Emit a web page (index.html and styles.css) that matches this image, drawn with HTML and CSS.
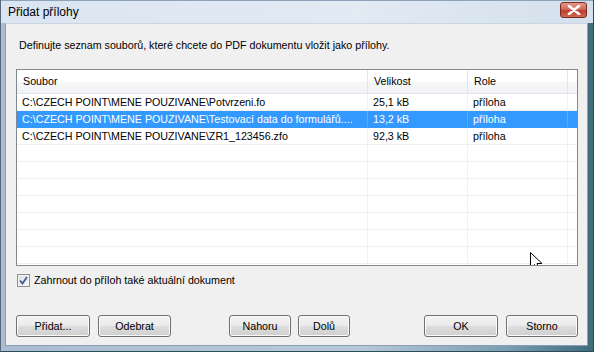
FILE: index.html
```html
<!DOCTYPE html>
<html>
<head>
<meta charset="utf-8">
<link rel="stylesheet" href="styles.css">
</head>
<body>
<div class="window">
  <div class="titlebar">
    <span class="title">Přidat přílohy</span>
    <div class="close">
      <svg width="14" height="10" viewBox="0 0 14 10"><path d="M2 1 L12 9 M12 1 L2 9" stroke="#fff" stroke-width="2.6" stroke-linecap="round"/></svg>
    </div>
  </div>
  <div class="client">
    <p class="intro">Definujte seznam souborů, které chcete do PDF dokumentu vložit jako přílohy.</p>
    <div class="list">
      <div class="row head">
        <div class="c c1">Soubor</div>
        <div class="c c2">Velikost</div>
        <div class="c c3">Role</div>
        <div class="c c4"></div>
      </div>
      <div class="row">
        <div class="c c1">C:\CZECH POINT\MENE POUZIVANE\Potvrzeni.fo</div>
        <div class="c c2">25,1 kB</div>
        <div class="c c3">příloha</div>
        <div class="c c4"></div>
      </div>
      <div class="row sel">
        <div class="c c1">C:\CZECH POINT\MENE POUZIVANE\Testovací data do formulářů....</div>
        <div class="c c2">13,2 kB</div>
        <div class="c c3">příloha</div>
        <div class="c c4"></div>
      </div>
      <div class="row">
        <div class="c c1">C:\CZECH POINT\MENE POUZIVANE\ZR1_123456.zfo</div>
        <div class="c c2">92,3 kB</div>
        <div class="c c3">příloha</div>
        <div class="c c4"></div>
      </div>
      <div class="row"><div class="c c1"></div><div class="c c2"></div><div class="c c3"></div><div class="c c4"></div></div>
      <div class="row"><div class="c c1"></div><div class="c c2"></div><div class="c c3"></div><div class="c c4"></div></div>
      <div class="row"><div class="c c1"></div><div class="c c2"></div><div class="c c3"></div><div class="c c4"></div></div>
      <div class="row"><div class="c c1"></div><div class="c c2"></div><div class="c c3"></div><div class="c c4"></div></div>
      <div class="row"><div class="c c1"></div><div class="c c2"></div><div class="c c3"></div><div class="c c4"></div></div>
      <div class="row"><div class="c c1"></div><div class="c c2"></div><div class="c c3"></div><div class="c c4"></div></div>
      <div class="row"><div class="c c1"></div><div class="c c2"></div><div class="c c3"></div><div class="c c4"></div></div>
      <div class="row last"><div class="c c1"></div><div class="c c2"></div><div class="c c3"></div><div class="c c4"></div></div>
      <svg class="cursor" width="13" height="20" viewBox="0 0 13 20"><path d="M0.5 0.5 L0.5 16.5 L4.5 12.5 L7.5 19.5 L10 18.5 L7 11.5 L12 11.5 Z" fill="#fff" stroke="#000" stroke-width="1"/></svg>
    </div>
    <label class="check">
      <span class="box"><svg width="9" height="9" viewBox="0 0 9 9"><path d="M1 4.5 L3.5 7.5 L8 1" fill="none" stroke="#3f5a93" stroke-width="1.8"/></svg></span>
      <span>Zahrnout do příloh také aktuální dokument</span>
    </label>
    <div class="buttons">
      <button class="btn w74">Přidat...</button>
      <button class="btn w73 g8">Odebrat</button>
      <button class="btn w62 g58">Nahoru</button>
      <button class="btn w52 g7">Dolů</button>
      <button class="btn w74 g74">OK</button>
      <button class="btn w72 g8">Storno</button>
    </div>
  </div>
</div>
</body>
</html>
```
FILE: styles.css
```css
html, body {
  margin: 0;
  padding: 0;
  background: #ffffff;
}
.window {
  width: 594px;
  height: 352px;
  box-sizing: border-box;
  display: flex;
  flex-direction: column;
  padding: 0 5px 5px 4px;
  background: linear-gradient(to right, #a9bcd1 0%, #b7c8da 60%, #7c9fb4 85%, #3e6c7c 100%);
  font-family: "Liberation Sans", Arial, sans-serif;
  font-size: 10.7px;
  color: #000;
  border-left: 1px solid #56687c;
  border-right: 1px solid #2c4c58;
  border-bottom: 1px solid #2c4c58;
}
.titlebar {
  height: 22px;
  display: flex;
  align-items: center;
  justify-content: space-between;
  margin: 0 -5px 0 -4px;
  padding: 0 6px 0 6px;
  background: linear-gradient(to right, #dbe5f1 0%, #e2eaf4 60%, #d4e0ec 100%);
  border-top: 1px solid #8fa3b8;
}
.title {
  font-size: 12px;
  padding-left: 1px;
  color: #000;
}
.close {
  width: 25px;
  height: 14px;
  margin-top: -4px;
  border: 1px solid #7a2a22;
  border-radius: 3px;
  background: linear-gradient(#e3988c 0%, #d1695a 45%, #bf3b2c 55%, #cf6a50 100%);
  display: flex;
  align-items: center;
  justify-content: center;
}
.client {
  flex: 1;
  background: #f0f0f0;
  border: 1px solid #8a9db2;
  border-top-color: #c9d6e4;
  padding: 0 0 0 10px;
  display: flex;
  flex-direction: column;
}
.intro {
  margin: 15px 0 0 3px;
  line-height: 13px;
  height: 13px;
}
.list {
  position: relative;
  margin-top: 17px;
  width: 560px;
  height: 195px;
  border: 1px solid #828790;
  background: #fff;
  overflow: hidden;
}
.row {
  display: flex;
  height: 16px;
  border-bottom: 1px solid #f0f0f0;
  line-height: 16px;
}
.row.head {
  height: 23px;
  line-height: 22px;
  border-bottom: 1px solid #e3e5e8;
  background: linear-gradient(#ffffff 0%, #ffffff 50%, #f6f7f9 51%, #f1f2f4 100%);
}
.c {
  box-sizing: border-box;
  white-space: nowrap;
  overflow: hidden;
  border-right: 1px solid #f0f0f0;
  padding-left: 5px;
}
.head .c {
  border-right-color: #e3e5e8;
  padding-left: 6px;
}
.c1 { width: 351px; }
.c2 { width: 100px; }
.c3 { width: 100px; }
.c4 { width: 9px; border-right: none; }
.head .c4 { border-right: none; }
.sel {
  background: #3399ff;
  color: #fff;
  border-bottom-color: #3399ff;
}
.sel .c { border-right-color: #5aadff; }
.cursor {
  position: absolute;
  left: 513px;
  top: 182px;
}
.check {
  display: flex;
  align-items: center;
  gap: 4px;
  margin: 7px 0 0 1px;
  height: 14px;
}
.box {
  width: 11px;
  height: 11px;
  border: 1px solid #8e8f8f;
  background: linear-gradient(135deg, #dcdcdc, #fbfbfb);
  display: flex;
  align-items: center;
  justify-content: center;
  box-shadow: inset 0 0 0 1px #f4f4f4;
}
.buttons {
  display: flex;
  margin-top: 28px;
}
.btn {
  height: 22px;
  box-sizing: border-box;
  border: 1px solid #707070;
  border-radius: 3px;
  background: linear-gradient(#f2f2f2 0%, #ebebeb 48%, #dddddd 52%, #cfcfcf 100%);
  font-family: "Liberation Sans", Arial, sans-serif;
  font-size: 10.7px;
  color: #000;
  padding: 0;
  box-shadow: inset 0 0 0 1px #fcfcfc;
}
.w74 { width: 74px; }
.w73 { width: 73px; }
.w72 { width: 72px; }
.w62 { width: 62px; }
.w52 { width: 52px; }
.g7 { margin-left: 7px; }
.g8 { margin-left: 8px; }
.g58 { margin-left: 58px; }
.g74 { margin-left: 74px; }
```
